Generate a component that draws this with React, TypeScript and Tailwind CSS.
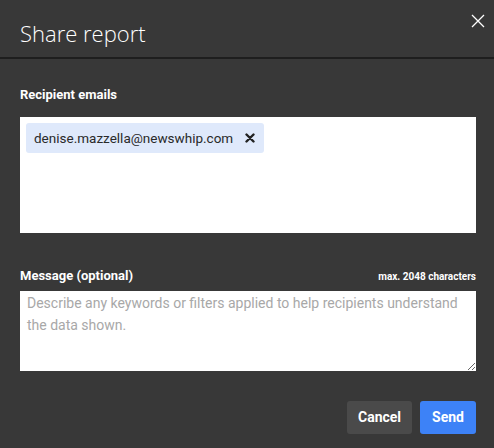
import React from "react";

export default function App() {
  return (
    <div className="w-[494px] h-[448px] bg-[#383838] text-white overflow-hidden" style={{ fontFamily: 'Roboto, "Liberation Sans", sans-serif' }}>
      <div className="relative h-[59px] border-b-2 border-[#1e1e1e] flex items-center pl-5">
        <h1 className="text-[22px] font-light leading-none mt-[9px]" style={{ fontFamily: '"Open Sans", sans-serif' }}>Share report</h1>
        <button className="absolute right-[8px] top-[13px] w-[16px] h-[16px] flex items-center justify-center">
          <svg width="14" height="14" viewBox="0 0 14 14">
            <path d="M1 1 L13 13 M13 1 L1 13" stroke="#ffffff" strokeWidth="1.3" />
          </svg>
        </button>
      </div>
      <div className="pl-[20px] pr-[18px]">
        <div className="mt-[29px] text-[13px] font-bold leading-none">Recipient emails</div>
        <div className="mt-[16px] h-[116px] bg-white p-[6px]">
          <div className="inline-flex items-center h-[30px] rounded-[3px] bg-[#dfe9fb] pl-[8px] pr-[9px] text-[#2a2a2a]">
            <span className="text-[13.5px]">denise.mazzella@newswhip.com</span>
            <svg className="ml-[12px]" width="10" height="10" viewBox="0 0 10 10">
              <path d="M1.5 1.5 L8.5 8.5 M8.5 1.5 L1.5 8.5" stroke="#222" strokeWidth="2.4" strokeLinecap="round" />
            </svg>
          </div>
        </div>
        <div className="mt-[36px] flex items-end justify-between">
          <span className="text-[13px] font-bold leading-none">Message (optional)</span>
          <span className="text-[10px] font-bold leading-none">max. 2048 characters</span>
        </div>
        <textarea
          className="mt-[9px] block w-full h-[80px] bg-white text-[14px] leading-[22px] px-[7px] py-[1px] text-[#333] placeholder:text-[#a8a8a8] outline-none"
          placeholder="Describe any keywords or filters applied to help recipients understand the data shown."
        />
        <div className="mt-[30px] flex justify-end gap-[8px]">
          <button className="h-[33px] px-[11px] rounded-[3px] bg-[#4a4a4a] text-[14px] font-bold">Cancel</button>
          <button className="h-[33px] px-[12px] rounded-[3px] bg-[#3d82f7] text-[14px] font-bold">Send</button>
        </div>
      </div>
    </div>
  );
}
